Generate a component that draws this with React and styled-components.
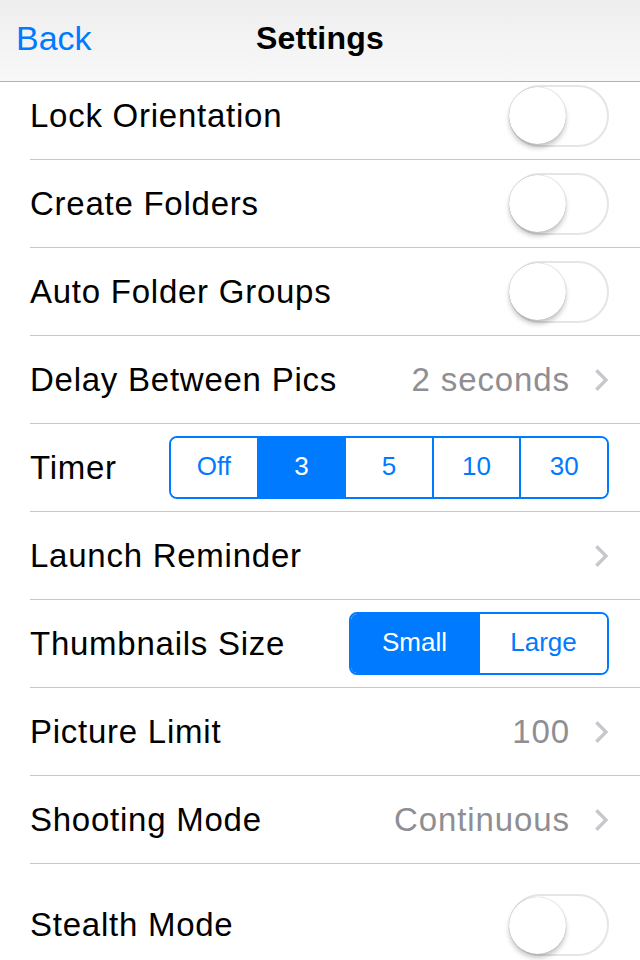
import React from "react";
import styled, { createGlobalStyle } from "styled-components";

const BLUE = "#007aff";

const GlobalStyle = createGlobalStyle`
  html, body {
    margin: 0;
    padding: 0;
    background: #ffffff;
  }
  body {
    font-family: "Liberation Sans", Arial, sans-serif;
    -webkit-font-smoothing: antialiased;
  }
`;

const ROWS = [
  { label: "Lock Orientation", kind: "toggle" },
  { label: "Create Folders", kind: "toggle" },
  { label: "Auto Folder Groups", kind: "toggle" },
  { label: "Delay Between Pics", kind: "link", value: "2 seconds" },
  { label: "Timer", kind: "segments", options: ["Off", "3", "5", "10", "30"], selected: 1, width: 440 },
  { label: "Launch Reminder", kind: "link" },
  { label: "Thumbnails Size", kind: "segments", options: ["Small", "Large"], selected: 0, width: 260 },
  { label: "Picture Limit", kind: "link", value: "100" },
  { label: "Shooting Mode", kind: "link", value: "Continuous" },
  { label: "Stealth Mode", kind: "toggle", gapTop: true },
];

const Chevron = () => (
  <ChevronIcon viewBox="0 0 14 22" aria-hidden="true">
    <polyline points="2.5,2.5 11,11 2.5,19.5" />
  </ChevronIcon>
);

const Toggle = () => (
  <Track>
    <Knob />
  </Track>
);

const Segmented = ({ options, selected, width }) => (
  <SegmentGroup $width={width}>
    {options.map((opt, i) => (
      <Segment key={opt} $active={i === selected}>
        {opt}
      </Segment>
    ))}
  </SegmentGroup>
);

const SettingRow = ({ row }) => (
  <Row $gapTop={row.gapTop}>
    <Label>{row.label}</Label>
    {row.kind === "toggle" && <Toggle />}
    {row.kind === "segments" && (
      <Segmented options={row.options} selected={row.selected} width={row.width} />
    )}
    {row.kind === "link" && (
      <Detail>
        {row.value && <Value>{row.value}</Value>}
        <Chevron />
      </Detail>
    )}
  </Row>
);

const App = () => {
  return (
    <Screen>
      <GlobalStyle />
      <NavBar>
        <BackButton>Back</BackButton>
        <Title>Settings</Title>
        <span />
      </NavBar>
      <Viewport>
        <List>
          {ROWS.map((row) => (
            <SettingRow key={row.label} row={row} />
          ))}
        </List>
      </Viewport>
    </Screen>
  );
};

const Screen = styled.div`
  width: 640px;
  height: 960px;
  display: flex;
  flex-direction: column;
  overflow: hidden;
  background: #ffffff;
`;

const NavBar = styled.header`
  flex: 0 0 auto;
  height: 82px;
  display: grid;
  grid-template-columns: 1fr auto 1fr;
  align-items: center;
  padding: 0 16px 5px;
  box-sizing: border-box;
  background: linear-gradient(#eeeeee, #f8f8f8);
  border-bottom: 1px solid #b2b2b2;
  position: relative;
  z-index: 1;
`;

const BackButton = styled.button`
  justify-self: start;
  border: none;
  background: none;
  padding: 0;
  font-family: "Liberation Sans", Arial, sans-serif;
  font-size: 34px;
  color: ${BLUE};
`;

const Title = styled.h1`
  margin: 0;
  font-size: 32px;
  font-weight: 700;
  color: #000000;
  letter-spacing: 0.2px;
`;

const Viewport = styled.main`
  flex: 1;
  overflow: hidden;
`;

const List = styled.div`
  margin-top: -10px;
`;

const Row = styled.div`
  height: 88px;
  box-sizing: border-box;
  margin-left: 30px;
  margin-top: ${(p) => (p.$gapTop ? "17px" : "0")};
  padding-right: 31px;
  display: flex;
  align-items: center;
  justify-content: space-between;
  border-bottom: ${(p) => (p.$gapTop ? "none" : "1px solid #c8c7cc")};
`;

const Label = styled.span`
  font-size: 33px;
  letter-spacing: 0.75px;
  color: #000000;
  white-space: nowrap;
`;

const Detail = styled.div`
  display: flex;
  align-items: center;
  gap: 25px;
`;

const Value = styled.span`
  font-size: 33px;
  letter-spacing: 0.9px;
  color: #8e8e93;
`;

const ChevronIcon = styled.svg`
  width: 14px;
  height: 22px;
  fill: none;
  stroke: #c7c7cc;
  stroke-width: 3.4;
  stroke-linecap: square;
  stroke-linejoin: miter;
`;

const Track = styled.div`
  width: 100px;
  height: 62px;
  box-sizing: border-box;
  border: 2px solid #e5e5e5;
  border-radius: 31px;
  display: flex;
  align-items: center;
`;

const Knob = styled.div`
  width: 57px;
  height: 57px;
  margin-left: -2px;
  border-radius: 50%;
  background: #ffffff;
  box-shadow: 0 4px 5px rgba(0, 0, 0, 0.22), 0 0 1px rgba(0, 0, 0, 0.35);
`;

const SegmentGroup = styled.div`
  width: ${(p) => p.$width}px;
  height: 63px;
  box-sizing: border-box;
  display: flex;
  border: 2px solid ${BLUE};
  border-radius: 8px;
  overflow: hidden;
`;

const Segment = styled.div`
  flex: 1;
  display: flex;
  align-items: center;
  justify-content: center;
  font-size: 26px;
  color: ${(p) => (p.$active ? "#ffffff" : BLUE)};
  background: ${(p) => (p.$active ? BLUE : "#ffffff")};
  padding-bottom: 3px;

  & + & {
    border-left: 2px solid ${BLUE};
  }
`;

export default App;
